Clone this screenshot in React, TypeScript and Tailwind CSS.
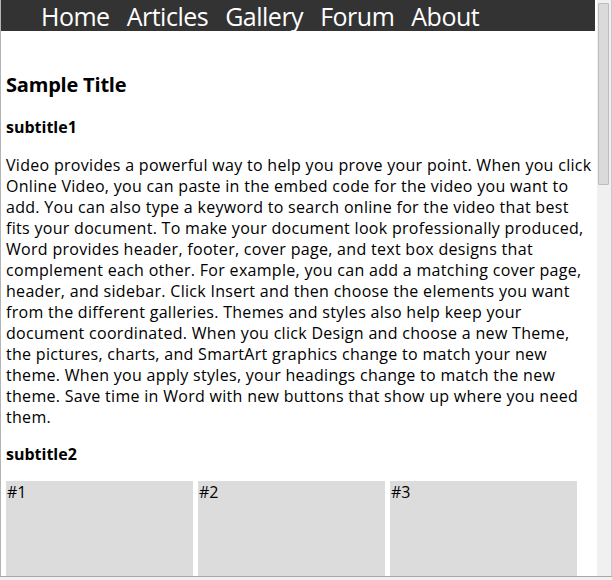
import React from "react";

const lines = [
  "Video provides a powerful way to help you prove your point. When you click",
  "Online Video, you can paste in the embed code for the video you want to",
  "add. You can also type a keyword to search online for the video that best",
  "fits your document. To make your document look professionally produced,",
  "Word provides header, footer, cover page, and text box designs that",
  "complement each other. For example, you can add a matching cover page,",
  "header, and sidebar. Click Insert and then choose the elements you want",
  "from the different galleries. Themes and styles also help keep your",
  "document coordinated. When you click Design and choose a new Theme,",
  "the pictures, charts, and SmartArt graphics change to match your new",
  "theme. When you apply styles, your headings change to match the new",
  "theme. Save time in Word with new buttons that show up where you need",
  "them.",
];

export default function App() {
  const font = { fontFamily: '"Open Sans", "Noto Sans", sans-serif' };
  return (
    <div
      className="w-[612px] h-[580px] overflow-hidden bg-[#f0f0f0] flex flex-col text-black"
      style={font}
    >
      <div className="flex h-[576px]">
        <div className="w-[1px] bg-[#b4b4b4]" />
        <div className="w-[594px] bg-white overflow-hidden flex flex-col">
          <nav className="h-[31px] bg-[#333333] flex items-center pl-[40px] gap-[17px] text-white text-[25px] leading-[31px] shrink-0 tracking-[-0.5px]">
            <span className="pt-[2px]">Home</span>
            <span className="pt-[2px]">Articles</span>
            <span className="pt-[2px]">Gallery</span>
            <span className="pt-[2px]">Forum</span>
            <span className="pt-[2px]">About</span>
          </nav>
          <div className="pl-[5px] pr-[3px]">
            <h1 className="mt-[40px] text-[20px] leading-[28px] font-bold tracking-[-0.2px]">Sample Title</h1>
            <h2 className="mt-[17px] text-[16px] leading-[22px] font-bold">subtitle1</h2>
            <p className="mt-[17px] text-[16px] leading-[21px] tracking-[0.3px]">
              {lines.map((l, i) => (
                <span key={i} className="block whitespace-nowrap">
                  {l}
                </span>
              ))}
            </p>
            <h2 className="mt-[15px] text-[16px] leading-[22px] font-bold">subtitle2</h2>
            <div className="mt-[16px] flex gap-[5px]">
              <div className="w-[187px] h-[120px] bg-[#dcdcdc] text-[16px] leading-[21px] pt-[1px] pl-[1px]">#1</div>
              <div className="w-[187px] h-[120px] bg-[#dcdcdc] text-[16px] leading-[21px] pt-[1px] pl-[1px]">#2</div>
              <div className="w-[187px] h-[120px] bg-[#dcdcdc] text-[16px] leading-[21px] pt-[1px] pl-[1px]">#3</div>
            </div>
          </div>
        </div>
        <div className="w-[17px] bg-[#f0f0f0] border-l-[2px] border-l-white flex flex-col pt-[3px] pl-[1px] pr-[2px] border-r border-r-[#c8c8c8]">
          <div className="h-[182px] bg-[#dadada] border border-[#bcbcbc] rounded-[1px]" />
        </div>
      </div>
      <div className="h-[1px] bg-[#a8a8a8]" />
    </div>
  );
}
